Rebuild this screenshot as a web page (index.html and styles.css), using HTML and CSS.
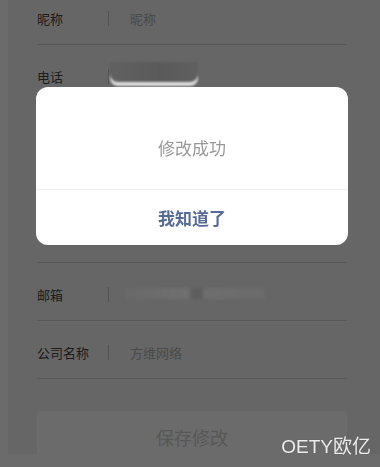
FILE: index.html
```html
<!DOCTYPE html>
<html>
<head>
    <title>编辑资料</title>
    <link rel="stylesheet" href="styles.css">
</head>
<body>

<div class="page">
    <div class="form">
        <div class="row">
            <span class="label">昵称</span>
            <span class="split"></span>
            <span class="value placeholder">昵称</span>
        </div>
        <div class="row">
            <span class="label">电话</span>
            <span class="split"></span>
            <span class="value"><span class="mosaic phone"></span></span>
        </div>
        <!-- rows hidden under the dialog -->
        <div class="row tall"></div>
        <div class="row tall"></div>
        <div class="row">
            <span class="label">邮箱</span>
            <span class="split"></span>
            <span class="value"><span class="mosaic mail"></span></span>
        </div>
        <div class="row">
            <span class="label">公司名称</span>
            <span class="split"></span>
            <span class="value placeholder">方维网络</span>
        </div>
    </div>
    <button class="save">保存修改</button>
</div>

<div class="mask">
    <div class="dialog">
        <div class="dialog-body">修改成功</div>
        <div class="dialog-btn">我知道了</div>
    </div>
</div>

<div class="watermark">OETY欧亿</div>

</body>
</html>
```

FILE: styles.css
```css
html, body {
    margin: 0;
    height: 100%;
    overflow: hidden;
}
body {
    font-family: "Noto Sans CJK SC", "Noto Sans", sans-serif;
    background-color: #fff;
}
.page {
    margin-left: 8px;
    height: 100%;
    background-color: #f4f4f4;
}
.form {
    margin: -13px 33px 0 29px;
}
.row {
    display: flex;
    align-items: center;
    height: 58px;
    box-sizing: border-box;
    padding-top: 5px;
    border-bottom: 1px solid #d2d2d2;
}
.row.tall {
    height: 80px;
}
.label {
    width: 71px;
    font-size: 13px;
    color: #444;
}
.split {
    width: 1px;
    height: 15px;
    background-color: #c4c4c4;
    margin-right: 21px;
}
.value {
    font-size: 13px;
    color: #333;
}
.placeholder {
    color: #b0b0b0;
}
.save {
    display: block;
    width: 310px;
    height: 52px;
    margin: 32px 0 0 29px;
    border: none;
    border-radius: 3px;
    background-color: #fff;
    color: #d0d0d0;
    font-family: "Noto Sans CJK SC", sans-serif;
    font-size: 18px;
}

/* blurred private data, drawn above the mask */
.mosaic {
    display: block;
    position: relative;
    z-index: 20;
}
.mosaic.phone {
    width: 88px;
    height: 24px;
    margin: -5px 0 0 -20px;
    border-radius: 0 0 8px 8px;
    background: linear-gradient(90deg, #616161 0, #5d5d5d 30%, #5a5a5a 60%, #606060 100%);
    box-shadow: inset 0 -4px 0 #dedede;
    filter: blur(0.8px);
}
.mosaic.mail {
    width: 140px;
    height: 11px;
    margin: -2px 0 0 -5px;
    background: linear-gradient(90deg, #696969 0, #6e6e6e 30%, #707070 45%, #5e5e5e 48%, #5e5e5e 54%, #6e6e6e 57%, #6b6b6b 100%);
    filter: blur(1.5px);
}

.mask {
    position: fixed;
    top: 0;
    left: 0;
    right: 0;
    bottom: 0;
    z-index: 10;
    padding-top: 87px;
    background-color: rgba(0, 0, 0, 0.58);
}
.dialog {
    width: 312px;
    margin-left: 36px;
    border-radius: 12px;
    background-color: #fff;
    overflow: hidden;
    position: relative;
    z-index: 30;
}
.dialog-body {
    height: 103px;
    display: flex;
    align-items: center;
    justify-content: center;
    padding-top: 18px;
    box-sizing: border-box;
    font-size: 17px;
    color: #999;
    border-bottom: 1px solid #eee;
}
.dialog-btn {
    height: 55px;
    display: flex;
    align-items: center;
    justify-content: center;
    font-size: 17px;
    font-weight: bold;
    color: #576b95;
}
.watermark {
    position: fixed;
    right: 9px;
    bottom: 9px;
    z-index: 40;
    font-family: "Liberation Sans", "Noto Sans CJK SC", sans-serif;
    font-size: 19px;
    color: #ececec;
    text-shadow: 0 0 1px #555;
}
```
